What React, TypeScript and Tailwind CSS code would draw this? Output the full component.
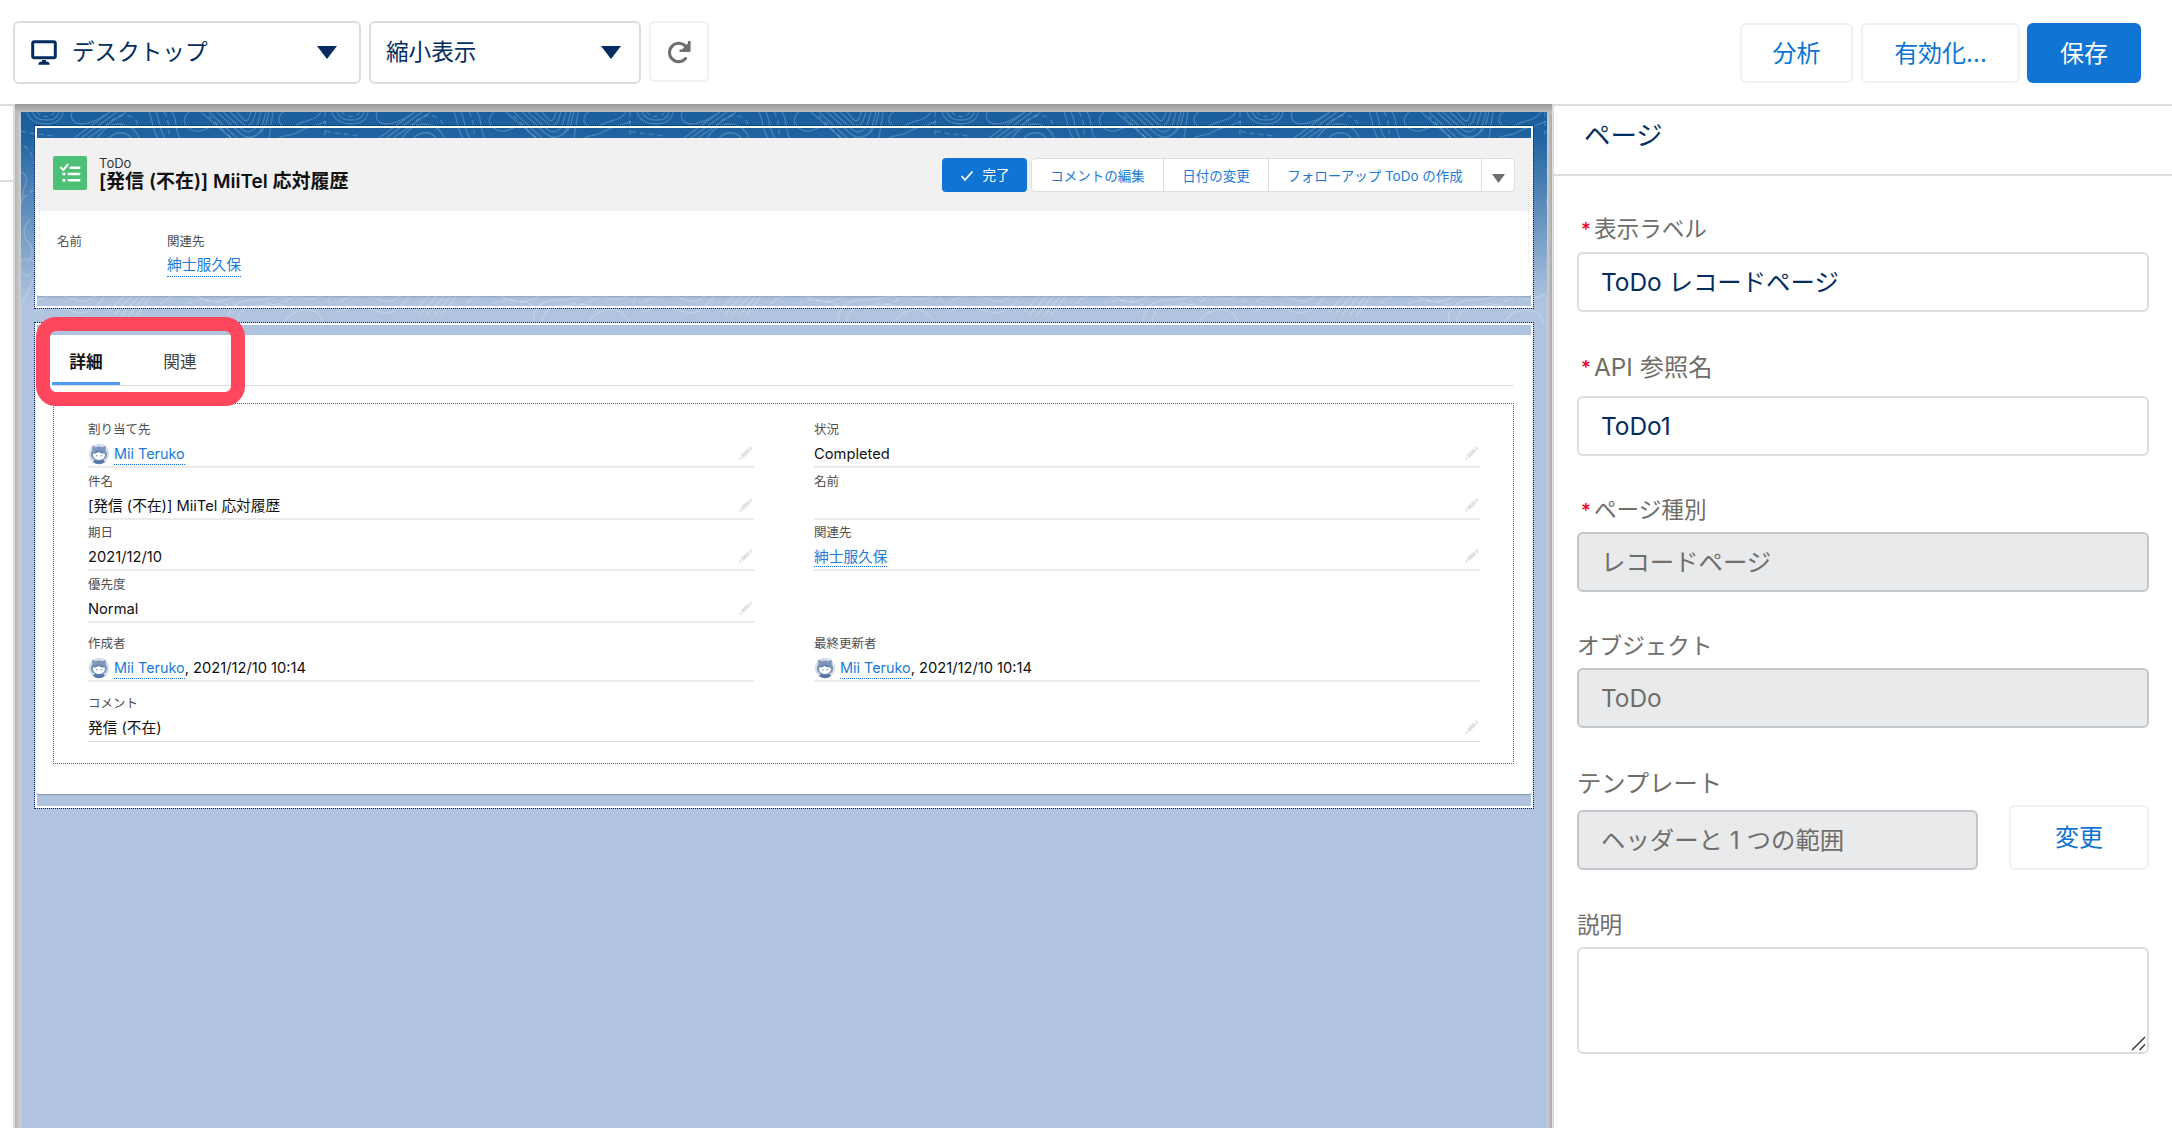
import { clsx } from "clsx";
import type { ReactNode } from "react";

const bodyFont = "font-['Inter','Noto_Sans_CJK_JP',sans-serif]";

function Caret({ className }: { className?: string }) {
  return (
    <svg viewBox="0 0 20 14" className={className} preserveAspectRatio="none">
      <path d="M0 0h20L10 14z" fill="currentColor" />
    </svg>
  );
}

function DesktopIcon() {
  return (
    <svg viewBox="0 0 26 26" className="h-[26px] w-[26px]">
      <rect x="1.7" y="1.7" width="22.6" height="16" rx="1.5" fill="none" stroke="#032d60" strokeWidth="3" />
      <path d="M11 20h4v1.5c2 0 3.5.8 3.5 2.5v.8h-11V24c0-1.7 1.5-2.5 3.5-2.5z" fill="#032d60" />
    </svg>
  );
}

function RefreshIcon() {
  return (
    <svg viewBox="0 0 24 24" className="h-6 w-6" fill="none" stroke="#706e6b" strokeWidth="3">
      <path d="M18.6 18.5A9.2 9.2 0 1 1 20 8.5" strokeLinecap="round" />
      <path d="M22.3 1v9.7h-9.7" strokeWidth="2.6" strokeLinejoin="round" />
      <path d="M21.5 2.5v7.5h-7z" fill="#706e6b" stroke="none" />
    </svg>
  );
}

function TaskIcon() {
  return (
    <svg viewBox="0 0 34 34" className="h-[34px] w-[34px]">
      <rect width="34" height="34" rx="2" fill="#4bc076" />
      <g fill="none" stroke="#fff" strokeLinecap="round" strokeWidth="2.4">
        <path d="M8 11.7l2.3 2.3 4.5-5.5" strokeWidth="2" />
        <path d="M17.7 11.8h8.6M15.7 18h10.6M15.7 24.2h10.6" />
        <path d="M10.7 18h.4M10.7 24.2h.4" strokeWidth="3" />
      </g>
    </svg>
  );
}

function Pencil() {
  return (
    <svg viewBox="0 0 14 14" className="mb-[3px] mr-px h-3.5 w-3.5" fill="#e2e2e2">
      <path d="M10.6.6c.3-.3.8-.3 1.1 0l1.6 1.6c.3.3.3.8 0 1.1l-1 1-2.7-2.7zM8.8 2.4l2.7 2.7-7.2 7.2-2.7-2.7zM1 10.500l2.400 2.400-3 .8c-.3 0-.4-.1-.3-.4z" />
    </svg>
  );
}

function Avatar() {
  return (
    <svg viewBox="0 0 22 22" className="mr-1 h-[22px] w-[22px] shrink-0">
      <circle cx="11" cy="11" r="10.2" fill="#d5dfeb" />
      <path d="M5 19a10.2 10.2 0 0 0 12 0l-1.5-2h-9z" fill="#5877a8" />
      <path d="M4.3 2.5l3.200 1.700a9 9 0 0 1 7 0l3.200-1.700v5c1 1.300 1.400 2.600 1.400 4 0 4-3.600 6-8.100 6s-8.100-2-8.100-6c0-1.400.4-2.700 1.400-4z" fill="#7f96ba" />
      <ellipse cx="11" cy="12.3" rx="5.9" ry="4.6" fill="#fff" />
      <path d="M5.5 10.5c2.2.2 4-.5 5-1.8.7 1.2 3 1.8 6 1.8-1-2.4-3.300-3.200-5.500-3.200s-4.500.8-5.500 3.200z" fill="#6682ae" />
      <circle cx="8.8" cy="12.8" r=".8" fill="#7d93b5" />
      <circle cx="13.2" cy="12.8" r=".8" fill="#7d93b5" />
    </svg>
  );
}

function Contours() {
  return (
    <svg className="absolute inset-x-0 top-0 h-[212px] w-full">
      <defs>
        <pattern id="contours" width="305" height="212" patternUnits="userSpaceOnUse">
          <g fill="none" stroke="#fff" strokeOpacity=".2" strokeWidth="1.3">
            <path d="M6 0c2 8 10 12 19 12S41 8 42 0M11 0c2 5 7 8 14 8s12-3 13-8" />
            <path d="M16 0c2 3 5 4.500 9 4.500S32 3 34 0" strokeDasharray="4 4" />
            <path d="M51 0c-2 6 1 11 8 12 12 0 20-6 30-12M53 26l36-26M60 26L96 0M67 26l38-26M76 26c8-12 18-16 28-13 8 2 12 7 14 13M88 26c7-7 17-7 22 0" />
            <path d="M84 16c6-9 14-14 24-12 6 2 9 6 10 12M0 19c12 4 22 2 34 6M143 0c6 9 4 18 6 26" strokeDasharray="5 4" />
            <path d="M128 0c4 8 3 18 9 26M135 0c4 8 3 18 9 26M151 0c6 8 2 18 8 26M168 0c-7 6-6 14 3 18s14-3 23-4M180 0l30 26M188 0l28 26" />
            <path d="M196 0l24 22c7 5 15 4 20-4l5-18M202 0l20 18c5 3 10 2 14-4l4-14M209 0l14 13c4 2 7 0 9-4l3-9M216 0l7 8c3 2 5 0 7-8M222 26c11 1 20-6 23-14l3-12M248 26l4-26" />
            <path d="M300 0c-5 9-17 8-25 13-8 4-15 2-17-4 0-5 2-8 5-9M258 26c5-3 11-2 17-5 8-6 20-6 30-12" />
            <path d="M304 0v26M210 26L188 4" strokeDasharray="5 4" />
            <path d="M0 60c5 2 7 8 4 14s-2 14-4 18M9 108c-7 6-8 16-2 22s6 16-2 20M0 150c9-9 17 1 12 9s-10 3-12 0M2 190l11-24" />
            <path d="M3 34c6 4 9 10 10 18M2 86l10-8" strokeDasharray="5 4" />
            <path d="M14 190c14-9 26-8 38-3s18 2 24-7M12 200c18-8 30-4 42 0s24-6 32-20M88 200l18-20M94 202l20-22M100 204l22-24M108 204l20-24M115 204l18-24M140 192c10-12 28-12 42-5s28 0 36-7" />
            <path d="M160 197c13-12 30-10 48-4M53 186c9-6 16-5 22-1M245 190c12 6 25-3 33-9" strokeDasharray="5 4" />
            <path d="M208 212c-3-14 7-24 22-24 22 0 30-8 40 0M216 212c0-11 7-18 18-18 16 0 26-6 40 6M262 212c5-9 12-14 23-14s15 5 18 14M275 183c12 8 25 3 32-3" />
          </g>
        </pattern>
      </defs>
      <rect width="100%" height="212" fill="url(#contours)" />
    </svg>
  );
}

function Link({ children }: { children: ReactNode }) {
  return (
    <span className="border-b border-dotted border-[#0b6fd0] pb-0.5 pt-[3px] text-[#1b7bd6]">{children}</span>
  );
}

interface FieldProps {
  label: string;
  height: string;
  editable?: boolean;
  thin?: boolean;
  children?: ReactNode;
}

function Field({ label, height, editable, thin, children }: FieldProps) {
  return (
    <div className={clsx("flex flex-col justify-end gap-[4px]", height)}>
      <div className="flex h-4 items-center text-[12.5px] leading-none text-[#4f4f4f]">{label}</div>
      <div
        className={clsx(
          "flex h-[26px] items-center justify-between",
          thin ? "border-b border-[#dddddd]" : "border-b-2 border-[#ebebeb]"
        )}
      >
        <div className="flex items-center text-[14.7px] leading-none text-[#111]">{children}</div>
        {editable && <Pencil />}
      </div>
    </div>
  );
}

function UserValue({ date }: { date?: string }) {
  return (
    <>
      <Avatar />
      <span className="text-[14.4px]"><Link>Mii Teruko</Link></span>
      {date && <span className="whitespace-pre">, {date}</span>}
    </>
  );
}

function Toolbar() {
  return (
    <header className="flex h-[104px] shrink-0 items-start pl-[13px] pr-[31px] pt-[21px] text-[#032d60]">
      <div className="flex h-[63px] w-[348px] items-center rounded-[6px] border-2 border-[#dadddf] pl-4 pr-[22px]">
        <DesktopIcon />
        <span className="ml-[15px] text-[22.6px] leading-none">デスクトップ</span>
        <Caret className="ml-auto h-[13px] w-5" />
      </div>
      <div className="ml-2 flex h-[63px] w-[272px] items-center rounded-[6px] border-2 border-[#dadddf] pl-[15px] pr-[18px]">
        <span className="text-[22.6px] leading-none">縮小表示</span>
        <Caret className="ml-auto h-[13px] w-5" />
      </div>
      <div className="ml-2 flex h-[61px] w-[60px] items-center justify-center rounded-[6px] border-2 border-[#f1f1f1]">
        <RefreshIcon />
      </div>
      <div className="ml-auto mt-0.5 flex text-[24px] leading-none text-[#0d74d4]">
        <button className="h-[60px] w-[113px] rounded-[6px] border-2 border-[#f1f1f1] pt-0.5">分析</button>
        <button className="ml-2 h-[60px] w-[159px] rounded-[6px] border-2 border-[#f1f1f1] pt-0.5">有効化...</button>
        <button className="ml-[7px] h-[60px] w-[114px] rounded-[6px] bg-[#0f74d4] pt-0.5 text-white">保存</button>
      </div>
    </header>
  );
}

function RecordHeader() {
  return (
    <div className="h-[184px] border border-dotted border-[#062560]">
      <div className="h-full border-2 border-white pt-[10px]">
        <div className="-ml-px h-[158px] w-[1496px] rounded-[3px] bg-white shadow-[0_1px_2px_rgba(0,0,0,.15)]">
          <div className="flex h-[73px] items-start rounded-t-[3px] bg-[#f1f1f1] pl-[17px] pr-[17px] pt-[18px]">
            <TaskIcon />
            <div className="ml-3 leading-none">
              <div className="flex h-3.5 items-center text-[13px] text-[#333]">ToDo</div>
              <div className="mt-0.5 flex h-[18px] items-center whitespace-nowrap text-[19px] font-semibold text-[#111]">
                [発信 (不在)] MiiTel 応対履歴
              </div>
            </div>
            <div className="ml-auto mt-0.5 flex h-[34px] text-[13.5px] leading-none text-[#1b7bd6]">
              <button className="flex w-[85px] items-center justify-center gap-[9px] rounded-[4px] bg-[#0f74d4] pt-px text-white">
                <svg viewBox="0 0 14 12" className="h-3 w-3.5" fill="none" stroke="#fff" strokeWidth="1.8" strokeLinecap="round">
                  <path d="M2 6.5l3 3.500L12 2" />
                </svg>
                完了
              </button>
              <div className="ml-1 flex divide-x divide-[#dddddd] rounded-[4px] border border-[#dddddd] bg-white">
                <button className="w-[132px] pt-[3px]">コメントの編集</button>
                <button className="w-[105px] pt-[3px]">日付の変更</button>
                <button className="w-[213px] pt-[3px]">フォローアップ ToDo の作成</button>
                <div className="flex w-8 items-center justify-center pt-[6px] text-[#706e6b]">
                  <Caret className="h-[9px] w-[13px]" />
                </div>
              </div>
            </div>
          </div>
          <div className="flex pl-[21px] pt-[25px] leading-none">
            <div className="w-[110px] text-[12.5px] text-[#4f4f4f]">名前</div>
            <div>
              <div className="text-[12.5px] text-[#4f4f4f]">関連先</div>
              <div className="mt-[9px] text-[14.8px]"><Link>紳士服久保</Link></div>
            </div>
          </div>
        </div>
      </div>
    </div>
  );
}

function RecordDetail() {
  return (
    <div className="mt-[13px] h-[487px] border border-dotted border-[#062560]">
      <div className="relative h-full border-2 border-white pt-[10px]">
        <div className="-ml-px h-[459px] w-[1496px] rounded-[3px] bg-white pl-4 pr-[18px] shadow-[0_1px_2px_rgba(0,0,0,.25)]">
          <div className="flex h-[51px] border-b border-[#dddddd] text-[16.7px] leading-none">
            <div className="flex w-[68px] items-center justify-center border-b-[3px] border-[#4f9bfa] pt-[7px] font-bold text-[#111]">詳細</div>
            <div className="ml-[26px] flex w-[68px] items-center justify-center pt-1 text-[#444]">関連</div>
          </div>
          <div className="ml-px mt-[17px] h-[361px] border border-dotted border-[#4c6a96] pl-[34px] pr-[33px] pt-4">
            <div className="flex gap-[60px]">
              <div className="flex-1">
                <Field label="割り当て先" height="h-[48px]" editable><UserValue /></Field>
                <Field label="件名" height="h-[52px]" editable>[発信 (不在)] MiiTel 応対履歴</Field>
                <Field label="期日" height="h-[51px]" editable>2021/12/10</Field>
                <Field label="優先度" height="h-[52px]" editable>Normal</Field>
                <Field label="作成者" height="h-[59px]"><UserValue date="2021/12/10 10:14" /></Field>
              </div>
              <div className="flex-1">
                <Field label="状況" height="h-[48px]" editable>Completed</Field>
                <Field label="名前" height="h-[52px]" editable />
                <Field label="関連先" height="h-[51px]" editable><Link>紳士服久保</Link></Field>
                <div className="h-[52px]" />
                <Field label="最終更新者" height="h-[59px]"><UserValue date="2021/12/10 10:14" /></Field>
              </div>
            </div>
            <Field label="コメント" height="h-[60px]" editable thin>発信 (不在)</Field>
          </div>
        </div>
        {/* highlight around the tabs */}
        <div className="absolute -left-px -top-2 h-[89px] w-[209px] rounded-[20px] border-[14px] border-[#ff485e]" />
      </div>
    </div>
  );
}

interface PanelLabelProps {
  children: ReactNode;
  required?: boolean;
  large?: boolean;
}

function PanelLabel({ children, required, large }: PanelLabelProps) {
  return (
    <div
      className={clsx(
        "flex h-6 items-center pt-px leading-none text-[#706e6b]",
        large ? "text-[24.3px]" : "text-[22.6px]"
      )}
    >
      {required && <span className="ml-[4px] mr-[4px] h-[20px] w-[9px] text-[19px] font-medium text-[#ea001e]">*</span>}
      <span>{children}</span>
    </div>
  );
}

function PanelInput({ children, disabled }: { children: ReactNode; disabled?: boolean }) {
  return (
    <div
      className={clsx(
        "flex h-[60px] items-center rounded-[6px] border-2 pl-[22px] pt-px text-[24.4px] leading-none",
        disabled ? "border-[#c3c6ca] bg-[#e9eaec] text-[#706e6b]" : "border-[#dadddf] bg-white text-[#032d60]"
      )}
    >
      {children}
    </div>
  );
}

function PropertiesPanel() {
  return (
    <aside className="flex-1 border-l-2 border-t-2 border-[#dadddf] bg-white">
      <div className="flex h-[70px] items-center border-b-2 border-[#dadddf] pb-[9px] pl-[30px] text-[26.4px] leading-none text-[#032d60]">
        ページ
      </div>
      <div className="pl-[23px] pr-[23px] pt-[41px]">
        <PanelLabel required>表示ラベル</PanelLabel>
        <div className="mt-[11px]"><PanelInput>ToDo レコードページ</PanelInput></div>
        <div className="mt-[43px]"><PanelLabel required large>API 参照名</PanelLabel></div>
        <div className="mt-[17px]"><PanelInput>ToDo1</PanelInput></div>
        <div className="mt-[42px]"><PanelLabel required>ページ種別</PanelLabel></div>
        <div className="mt-2.5"><PanelInput disabled>レコードページ</PanelInput></div>
        <div className="mt-[42px]"><PanelLabel>オブジェクト</PanelLabel></div>
        <div className="mt-2.5"><PanelInput disabled>ToDo</PanelInput></div>
        <div className="mt-[43px]"><PanelLabel large>テンプレート</PanelLabel></div>
        <div className="mt-2.5 flex items-end">
          <div className="w-[401px]"><PanelInput disabled>ヘッダーと 1 つの範囲</PanelInput></div>
          <button className="ml-auto h-[65px] w-[140px] rounded-[6px] border-2 border-[#f1f1f1] text-[24px] leading-none text-[#0d74d4]">
            変更
          </button>
        </div>
        <div className="mt-[43px]"><PanelLabel>説明</PanelLabel></div>
        <div className="mt-2.5 flex h-[107px] items-end justify-end rounded-[6px] border-2 border-[#dadddf]">
          <svg viewBox="0 0 15 15" className="mb-px mr-px h-[15px] w-[15px]" stroke="#444" strokeWidth="1.6">
            <path d="M1 14L14 1M8.5 14L14 8.5" />
          </svg>
        </div>
      </div>
    </aside>
  );
}

export default function App() {
  return (
    <div className={clsx("flex h-[1132px] w-[2172px] flex-col overflow-hidden bg-white", bodyFont)}>
      <Toolbar />
      <main className="flex h-[1024px]">
        <div className="w-[15px] border-r-2 border-t-2 border-[#dadddf]">
          <div className="h-[76px] border-b-2 border-[#dadddf]" />
        </div>
        <div className="w-[1537px] bg-[#c9cacc] bg-[linear-gradient(to_bottom,#9a9a9a,#bdbdbd_8px,transparent_12px),linear-gradient(to_right,#b4b6b6,#cfcfd1_6px,#cfcfd1_1532px,#a9a9a9)] pl-1.5 pr-[5px] pt-2">
          <div className="relative h-[1016px] bg-[#b0c4df] bg-[linear-gradient(to_bottom,#195e9d,#1f63a1_24px,#b0c4df_190px)] pl-[13px] pr-[13px] pt-[13px]">
            <Contours />
            <div className="relative">
              <RecordHeader />
              <RecordDetail />
            </div>
          </div>
        </div>
        <PropertiesPanel />
      </main>
    </div>
  );
}
